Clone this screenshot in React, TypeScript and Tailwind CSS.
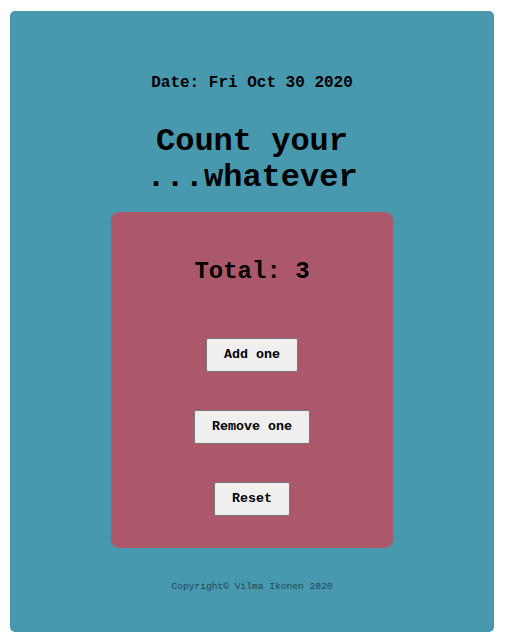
import React, { useState } from "react";

const mono = { fontFamily: '"Liberation Mono", "Courier New", monospace' };

export default function App() {
  const [count, setCount] = useState(3);
  const btn =
    "bg-[#efefef] border border-[#767676] rounded-[2px] px-[17px] h-[34px] text-[13.33px] font-bold text-black leading-none";
  return (
    <div className="w-[510px] h-[642px] bg-white pl-[10px] pt-[11px]" style={mono}>
      <div className="w-[484px] h-[621px] bg-[#4898ae] rounded-[5px] flex flex-col items-center">
        <p className="mt-[63px] text-[16px] leading-[18px] font-bold text-black">
          Date: Fri Oct 30 2020
        </p>
        <h1 className="mt-[32px] text-[32px] leading-[36px] font-bold text-black text-center">
          Count your
          <br />
          ...whatever
        </h1>
        <div className="mt-[16px] w-[282px] h-[336px] bg-[#ab586b] rounded-[8px] flex flex-col items-center">
          <p className="mt-[46px] text-[24px] leading-[28px] font-bold text-black">
            Total: {count}
          </p>
          <button className={`${btn} mt-[52px]`} onClick={() => setCount(count + 1)}>
            Add one
          </button>
          <button className={`${btn} mt-[38px]`} onClick={() => setCount(count - 1)}>
            Remove one
          </button>
          <button className={`${btn} mt-[38px]`} onClick={() => setCount(0)}>
            Reset
          </button>
        </div>
        <p className="mt-[33px] text-[9.6px] leading-[12px] text-[#1f4756]">
          Copyright© Vilma Ikonen 2020
        </p>
      </div>
    </div>
  );
}
